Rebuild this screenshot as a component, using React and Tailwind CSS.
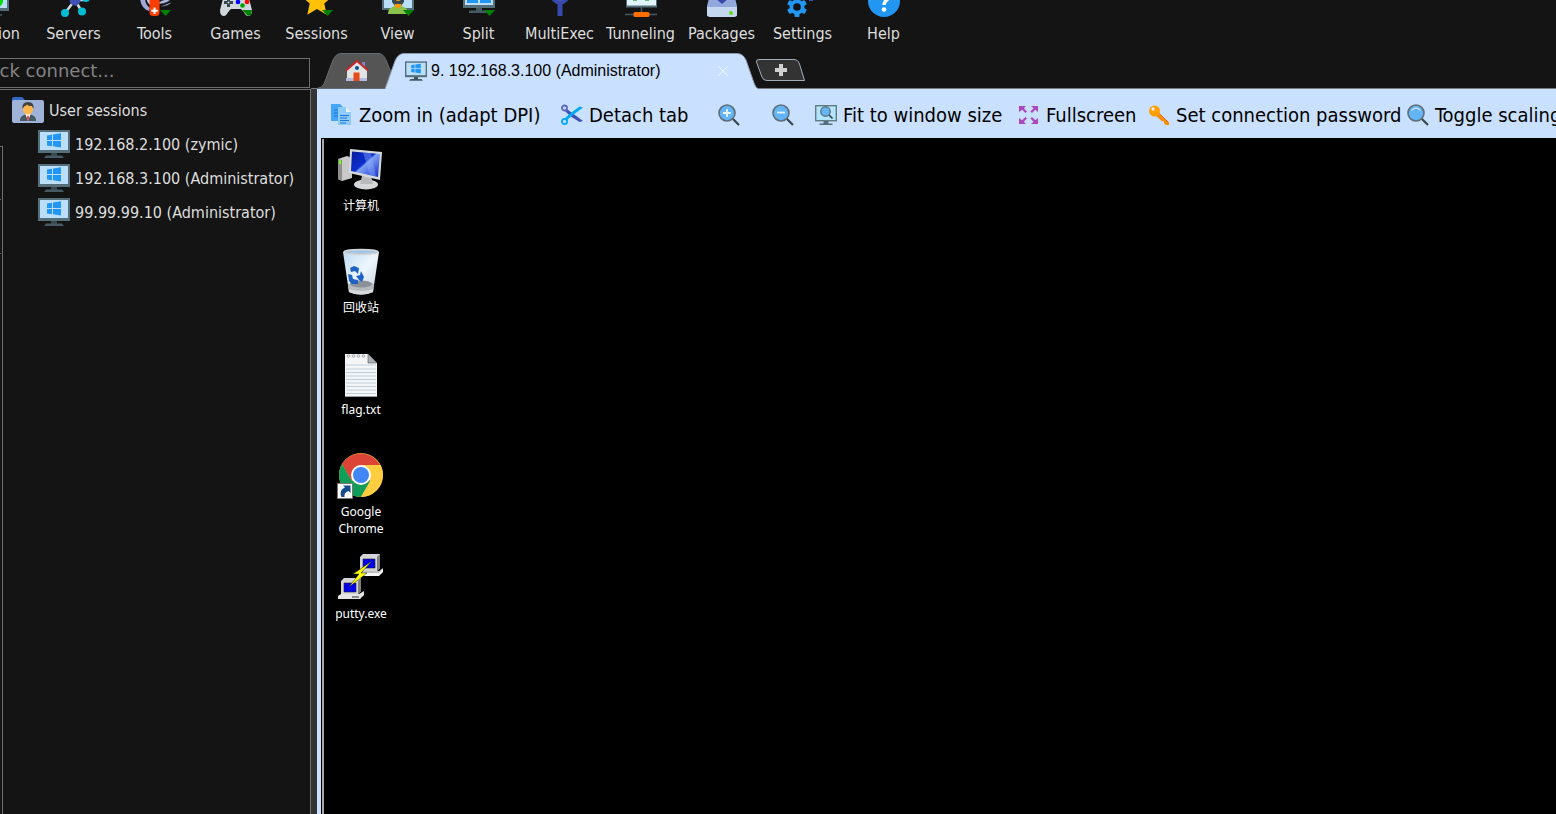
import React from "react";

const GreenArrow = ({ x = 21, y = 26 }) => (
  <path d={`M${x} ${y}h11l-5.500 6z`} fill="#008000" />
);

const WindowsMonitor = ({ className = "size-8" }) => (
  <svg viewBox="0 0 32 32" className={`${className} shrink-0`} aria-hidden="true">
    <rect y="2" width="32" height="23" fill="#546e7a" />
    <rect x="2" y="4" width="28" height="18" fill="#bbdefb" />
    <path d="M13 25h6v3h-6z" fill="#37474f" />
    <path d="M8 27.500h16l2 2.500H6z" fill="#455a64" />
    <path d="M9 7.500l5-.8v5.300H9zM15 6.500l8-1.200V12h-8zM9 13h5v5.300l-5-.8zM15 13h8v6.500l-8-1.200z" fill="#2196f3" />
  </svg>
);

const Drawing = ({ children, className = "size-8", box = "0 0 32 32" }) => (
  <svg viewBox={box} className={`${className} shrink-0`} aria-hidden="true">
    {children}
  </svg>
);

const menu = [
  {
    label: "Session",
    icon: (
      <>
        <rect y="2" width="32" height="25" fill="#546e7a" />
        <rect x="2" y="4" width="28" height="20" fill="#bbdefb" />
        <circle cx="20" cy="17" r="6" fill="#00e000" />
        <path d="M13 27h6v3h6v2H7v-2h6z" fill="#37474f" />
      </>
    ),
  },
  {
    label: "Servers",
    icon: (
      <>
        <path d="M17 16L7 29M17 16l7 12M17 16h11M17 16L6 6M17 16l5-12" stroke="#cfd8dc" strokeWidth="2.500" />
        <circle cx="17" cy="16" r="5.500" fill="#3f51b5" />
        <g fill="#00bcd4">
          <circle cx="7" cy="29" r="4" />
          <circle cx="24" cy="27.500" r="4" />
          <circle cx="28" cy="14" r="4" />
          <circle cx="6" cy="6" r="4" />
          <circle cx="22" cy="4" r="4" />
        </g>
      </>
    ),
  },
  {
    label: "Tools",
    icon: (
      <>
        <path d="M1 12c0 8 3 13 9 15l1-3c-4-3-5-6-5-12z" fill="#9fa8da" />
        <path d="M7 14l2 5 2 2v-7z" fill="#c5cae9" />
        <path d="M31 16c-2 2-5 3.500-11 4v-2l7-3zM32 18.500c-2 3-6 3.500-10 4" fill="#b0b8e0" stroke="#37474f" strokeWidth=".6" />
        <rect x="10.500" y="6" width="10" height="26" rx="3.500" fill="#ff3d00" />
        <path d="M14.500 23.500h2v2.300h2.300v2h-2.300v2.300h-2v-2.300h-2.300v-2h2.300z" fill="#fff" />
        <GreenArrow />
      </>
    ),
  },
  {
    label: "Games",
    icon: (
      <>
        <path d="M4 11Q5 8 8 8h16q3 0 4 3l4 15q0 6-4 6c-3 0-4-5-7-7H11c-3 2-4 7-7 7q-4 0-4-6z" fill="#cfd8dc" />
        <path d="M7 14h3v3h3v3h-3v3H7v-3H4v-3h3z" fill="#37474f" />
        <circle cx="8.500" cy="18.500" r="1" fill="#cfd8dc" />
        <circle cx="18" cy="18" r="2.300" fill="#0000ff" />
        <circle cx="27" cy="18" r="2.300" fill="#f00" />
        <circle cx="22.500" cy="21.500" r="2.300" fill="#00a000" />
        <circle cx="22.500" cy="14" r="2.300" fill="#ffc107" />
        <path d="M22 26h10l-1 5-3 1z" fill="#008000" />
      </>
    ),
  },
  {
    label: "Sessions",
    icon: (
      <>
        <path d="M16 1l4.500 10 11 1.200-8.200 7.400 2.400 11.200L16 25l-9.700 5.800 2.400-11.200L.5 12.200l11-1.200z" fill="#ffc107" />
        <GreenArrow />
      </>
    ),
  },
  {
    label: "View",
    icon: (
      <>
        <rect y="2" width="32" height="24" fill="#546e7a" />
        <rect x="2" y="4" width="28" height="20" fill="#bbdefb" />
        <path d="M10 10h12v8l-3 4h-6l-3-4z" fill="#37474f" />
        <ellipse cx="16" cy="12" rx="4" ry="5" fill="#ffa726" />
        <path d="M6 30c0-5 3-7 7-8h6c4 1 7 3 7 8z" fill="#8bc34a" />
        <path d="M12.500 20h7l-1 3-2.500 1.500-2.500-1.500z" fill="#ff9800" />
        <GreenArrow />
      </>
    ),
  },
  {
    label: "Split",
    icon: (
      <>
        <rect y="2" width="32" height="22" fill="#546e7a" />
        <rect x="2" y="4" width="28" height="17" fill="#bbdefb" />
        <path d="M4 6h11v6H4zM17 6h11v6H17zM4 14h11v5H4zM17 14h11v5H17z" fill="#2196f3" />
        <path d="M13 24h6v2.500h7V29H6v-2.500h7z" fill="#455a64" />
        <GreenArrow />
      </>
    ),
  },
  {
    label: "MultiExec",
    icon: (
      <>
        <path d="M16 32V20" fill="none" stroke="#3949ab" strokeWidth="5" />
        <circle cx="16" cy="11" r="7.500" fill="#5c6bc0" stroke="#3949ab" strokeWidth="4" />
      </>
    ),
  },
  {
    label: "Tunneling",
    icon: (
      <>
        <rect x="1" y="0" width="31" height="23.500" fill="#546e7a" />
        <rect x="2" y="2" width="29" height="19.500" fill="#e1f5fe" />
        <path d="M8 15h4v2H8zM20 15h4v2h-4z" fill="#66bb6a" />
        <path d="M16.500 23v5M0 30.500h32" stroke="#455a64" strokeWidth="1.500" />
        <rect x="8.500" y="28" width="16" height="5" rx="1.500" fill="#ff6d00" />
      </>
    ),
  },
  {
    label: "Packages",
    icon: (
      <>
        <path d="M5 6h22l4 16v10H1V22z" fill="#90a8dc" />
        <path d="M1 23h30v7q0 3-3 3H4q-3 0-3-3z" fill="#c5d6f0" />
        <path d="M13 6h6v8h4l-7 6-7-6h4z" fill="#3949ab" />
        <circle cx="25" cy="29" r="2" fill="#64dd17" />
      </>
    ),
  },
  {
    label: "Settings",
    icon: (
      <>
        <g transform="translate(10 23)" fill="#2196f3">
          <circle r="7.500" />
          {[0, 60, 120].map((a) => (
            <rect key={a} x="-2.500" y="-10" width="5" height="20" rx="1" transform={`rotate(${a})`} />
          ))}
        </g>
        <circle cx="10" cy="23" r="3.800" fill="#141414" />
        <circle cx="24" cy="10" r="6" fill="#3f51b5" />
        <path d="M22 14h4v3h-4z" fill="#3f51b5" />
        <circle cx="24" cy="10" r="2.500" fill="#141414" />
      </>
    ),
  },
  {
    label: "Help",
    icon: (
      <>
        <circle cx="16" cy="17" r="16" fill="#2196f3" />
        <path d="M11 11c0-6 11-6 11 0 0 5-6 4-6 10" fill="none" stroke="#fff" strokeWidth="3.500" />
        <circle cx="16" cy="25.500" r="2.300" fill="#fff" />
      </>
    ),
  },
];

const sessions = ["192.168.2.100 (zymic)", "192.168.3.100 (Administrator)", "99.99.99.10 (Administrator)"];

const Magnifier = ({ sign, shine }) => (
  <Drawing className="size-[22px]" box="0 0 22 22">
    <path d="M14 14l7 7" stroke="#37474f" strokeWidth="2.200" />
    <circle cx="9" cy="9" r="8" fill="#64b5f6" stroke="#616e78" strokeWidth="1.600" />
    {sign && <path d={sign} stroke="#e8f4ff" strokeWidth="1.800" />}
    {shine && <path d="M4.500 6.500q4.500-5 9 0" fill="none" stroke="#bbdefb" strokeWidth="1.300" />}
  </Drawing>
);

const tools = [
  {
    label: "Zoom in (adapt DPI)",
    width: "w-[230px]",
    icon: (
      <Drawing className="size-[22px]" box="0 0 22 22">
        <path d="M0 0h9l4 4v13H0z" fill="#42a5f5" />
        <path d="M3 6h4M3 9h4M3 12h4" stroke="#1976d2" />
        <path d="M7 3h8l5 5v13H7z" fill="#90caf9" />
        <path d="M15 3v5h5z" fill="#e1f5fe" />
        <path d="M9 11.500h9M9 14h7M9 16.500h9M9 19h6" stroke="#1976d2" strokeWidth="1.200" />
      </Drawing>
    ),
  },
  {
    label: "Detach tab",
    width: "w-[157px]",
    icon: (
      <Drawing className="size-[22px]" box="0 0 22 22">
        <path d="M5 4.500l7 5 10 7.500-3.500 1L9 12 4 7z" fill="#3f51b5" />
        <circle cx="3.500" cy="4" r="2.500" fill="none" stroke="#5c6bc0" strokeWidth="1.800" />
        <path d="M18.500 2.500L22 3.500 12 11l-7 6-1.500-2.500L9 9.500z" fill="#03a9f4" />
        <circle cx="3.500" cy="17.500" r="2.600" fill="none" stroke="#03a9f4" strokeWidth="1.800" />
      </Drawing>
    ),
  },
  { name: "Zoom in", width: "w-[54px]", icon: <Magnifier sign="M5 9h8M9 5v8" /> },
  { name: "Zoom out", width: "w-[43px]", icon: <Magnifier sign="M5 8.500h8" /> },
  {
    label: "Fit to window size",
    width: "w-[203px]",
    icon: (
      <Drawing className="size-[22px]" box="0 0 22 22">
        <rect x=".7" y="1.700" width="20.600" height="15" fill="#b3e5fc" stroke="#607d7f" strokeWidth="1.400" />
        <path d="M8.500 17h5v2.500h4V21h-13v-1.500h4z" fill="#546e7a" />
        <path d="M13 10l4.500 4.500" stroke="#37474f" strokeWidth="1.700" />
        <circle cx="10.500" cy="7.500" r="4.700" fill="#64b5f6" stroke="#607080" strokeWidth="1.400" />
      </Drawing>
    ),
  },
  {
    label: "Fullscreen",
    width: "w-[130px]",
    icon: (
      <Drawing className="size-[22px]" box="0 0 22 22">
        <path
          d="M1 2h7L5.800 4.200 9 7.400 7.400 9 4.200 5.800 1 8zM20 2v6l-2.700-2.200L14 9l-1.600-1.600 3.200-3.200L13 2zM1 20v-6l3 2.200L7.400 13 9 14.600 5.800 17.800 8 20zM20 20h-7l2.600-2.200-3.200-3.200L14 13l3.300 3.200L20 14z"
          fill="#ab47bc"
        />
      </Drawing>
    ),
  },
  {
    label: "Set connection password",
    width: "w-[259px]",
    icon: (
      <Drawing className="size-[22px]" box="0 0 22 22">
        <path d="M9 8l12 10.500V21h-3.500L16 19v-1.800h-2L7 11z" fill="#fb8c00" />
        <path d="M11 9l9.500 9.500" stroke="#e65100" strokeWidth=".8" />
        <circle cx="6.500" cy="7" r="5.500" fill="#ffa000" />
        <circle cx="5" cy="5" r="1.700" fill="#e3f0ff" />
      </Drawing>
    ),
  },
  { label: "Toggle scaling", width: "", icon: <Magnifier shine /> },
];

const desktop = [
  {
    label: "计算机",
    icon: (
      <>
        <defs>
          <linearGradient id="screen" x1="0" y1="0" x2="1" y2="1">
            <stop offset="0" stopColor="#0a1a9c" />
            <stop offset=".45" stopColor="#0c2fd0" />
            <stop offset=".5" stopColor="#7fa2f5" />
            <stop offset="1" stopColor="#1028c8" />
          </linearGradient>
        </defs>
        <path d="M1 13l9-3 5 2v20L5 35l-4-2z" fill="#c9c9c9" />
        <path d="M1 13l4 1v21l-4-2z" fill="#8e8e8e" />
        <path d="M2 14l2 .5v4L2 18z" fill="#76ff03" />
        <ellipse cx="29" cy="38.500" rx="12" ry="5" fill="#d5d7d8" />
        <path d="M25 30h9l2 8H23z" fill="#b8bbbd" />
        <path d="M13 3l32 3-2 28-31-7z" fill="#d7dadc" />
        <path d="M15 5.500l28 2.500-2 23-27-6z" fill="url(#screen)" />
        <path d="M26 6.500l8 .8 5 23.200-6-1.300z" fill="#8fb0ff" opacity=".4" />
      </>
    ),
  },
  {
    label: "回收站",
    icon: (
      <>
        <defs>
          <linearGradient id="bin" x1="0" x2="1" y1="0" y2="1">
            <stop offset="0" stopColor="#bcdcf5" />
            <stop offset=".5" stopColor="#eef6fc" />
            <stop offset="1" stopColor="#c2cfda" />
          </linearGradient>
        </defs>
        <path d="M6 4l6 40q12 5 24 0l6-40z" fill="url(#bin)" />
        <path d="M11 36q13-7 26 0l-1 8q-12 5-24 0z" fill="#b4babf" />
        <ellipse cx="24" cy="36" rx="11" ry="3.500" fill="#8b9196" />
        <path d="M12 41q12 4 24 0v3q-12 5-24 0z" fill="#d7dadc" />
        <ellipse cx="24" cy="4" rx="17" ry="2.500" fill="#a4c6e3" stroke="#d3d6d8" strokeWidth="1.500" />
        <path d="M13 20l4-2 5 2-1 6-3-3-4 1zM24 23l3 6-2 5-3-2-3-4 4-1zM11 26l4 1 1 4 5 1v4h-6l-3-3z" fill="#1e63c4" />
      </>
    ),
  },
  {
    label: "flag.txt",
    icon: (
      <>
        <path d="M8 4h23l9 9v34H8z" fill="#f4f5f6" />
        <path d="M9 15h30M9 19h30M9 22.500h30M9 26h30M9 29.500h30M9 33h30M9 36.500h30M9 40h30M9 43.500h30" stroke="#bfd0dd" strokeWidth="1" />
        <path d="M31 4v9h9z" fill="#aaafb5" stroke="#555" strokeWidth=".6" />
        <g fill="none" stroke="#999" strokeWidth=".8">
          <circle cx="11.500" cy="6" r="1.300" />
          <circle cx="16.500" cy="6" r="1.300" />
          <circle cx="21.500" cy="6" r="1.300" />
          <circle cx="26.500" cy="6" r="1.300" />
        </g>
        <path d="M8 46.500h32" stroke="#9aa0a5" />
      </>
    ),
  },
  {
    label: "Google Chrome",
    icon: (
      <>
        <circle cx="24" cy="23" r="22" fill="#ffcd40" />
        <path d="M24 13h19A22 22 0 0 0 5 12l9.500 16.500z" fill="#db4437" />
        <path d="M5 12a22 22 0 0 0 19 33l9.500-16.500H14.500z" fill="#0f9d58" />
        <path d="M24 13h19.500a22 22 0 0 1-19.500 32l9.500-16.500z" fill="#ffcd40" />
        <circle cx="24" cy="23" r="10" fill="#fff" />
        <circle cx="24" cy="23" r="8" fill="#4285f4" />
        <path d="M.5 31.500h15v15H.5z" fill="#fff" stroke="#777" />
        <path d="M4.500 45c-2-4-.5-8 3.500-9.500L6 33.500h7.500V41L11.500 39c-3 1-4.500 3-4 6z" fill="#174b8c" />
      </>
    ),
  },
  {
    label: "putty.exe",
    icon: (
      <>
        <path d="M23 3l3-3h17v14l-3 3H23z" fill="#d5d5d5" />
        <path d="M40 3l3-3v14l-3 3z" fill="#808080" />
        <path d="M26 5h12v9H26z" fill="#0000f0" stroke="#222" strokeWidth=".6" />
        <path d="M26 17h16l4-3v3l-4 4H22z" fill="#c0c0c0" />
        <path d="M22 19h20l4-4v3l-4 4H22z" fill="#f5f5f5" />
        <path d="M4 27l3-3h17v13l-3 3H4z" fill="#d5d5d5" />
        <path d="M21 27l3-3v13l-3 3z" fill="#808080" />
        <path d="M7 29h12v9H7z" fill="#0000f0" stroke="#222" strokeWidth=".6" />
        <path d="M1 42l3-2h18l5-3v4l-4 4H1z" fill="#e5e5e5" />
        <path d="M15 43h7" stroke="#333" />
        <path d="M35 7L16 20h6L12 33l18-14h-6z" fill="#ff0" stroke="#222" strokeWidth=".5" />
      </>
    ),
  },
];

const Tab = ({ path, fill, stroke, box, children, className }) => (
  <div className={`relative flex shrink-0 items-center ${className}`}>
    <svg viewBox={box} className="absolute inset-0 size-full overflow-visible" aria-hidden="true">
      <path d={path} fill={fill} stroke={stroke} />
    </svg>
    {children}
  </div>
);

export default function App() {
  return (
    <div className="flex h-screen flex-col overflow-hidden bg-[#141414] font-['DejaVu_Sans_Condensed','Noto_Sans',sans-serif] text-[#dedede]">
      <nav className="-ml-12 flex h-[53px] shrink-0" aria-label="Main">
        {menu.map((m) => (
          <button key={m.label} className="-mt-4 flex w-[81px] shrink-0 flex-col items-center gap-2 text-base leading-5">
            <Drawing className="size-8 overflow-visible">{m.icon}</Drawing>
            <span>{m.label}</span>
          </button>
        ))}
      </nav>

      <div className="flex min-h-0 flex-1">
        <aside className="flex w-[311px] shrink-0 flex-col pt-[5px]">
          <input
            aria-label="Quick connect"
            placeholder="Quick connect..."
            className="-ml-9 mr-px h-[30px] border border-[#6e6e6e] bg-transparent pb-1.5 pl-1 font-['DejaVu_Sans',sans-serif] text-lg leading-6 outline-none placeholder:text-[#858585]"
          />
          <div className="mt-px flex flex-1 border-t border-r border-[#6e6e6e]">
            <div className="mt-14 w-[3px] border-t border-r border-[#6e6e6e] pt-[52px]">
              <div className="h-[55px] w-px border-y border-[#6e6e6e]" />
            </div>
            <ul className="flex flex-col pt-[3px] pl-[9px] text-base">
              <li className="flex h-[34px] items-center gap-[5px]">
                <Drawing>
                  <path d="M0 9V5q0-2 2-2h8l3 3v6H0z" fill="#3367c8" />
                  <rect y="6" width="32" height="23" rx="2" fill="#9fb3d8" />
                  <path d="M8 27c0-5 3-6 8-7 5 1 8 2 8 7z" fill="#455a64" />
                  <path d="M13 19h6l-3 8z" fill="#fff" />
                  <path d="M16 21l1 2-.5 4h-1L15 23z" fill="#e53935" />
                  <ellipse cx="16" cy="15" rx="5" ry="5.500" fill="#ffb74d" />
                  <path d="M10.500 15q-1-7 5.500-7t5.500 7l-1.500-3q-4 0-5-1.500-1 1.500-3 2z" fill="#424242" />
                </Drawing>
                <span className="pt-0.5">User sessions</span>
              </li>
              {sessions.map((s) => (
                <li key={s}>
                  <button className="ml-[26px] flex h-[34px] items-center gap-[5px] whitespace-nowrap">
                    <WindowsMonitor />
                    <span className="pt-0.5">{s}</span>
                  </button>
                </li>
              ))}
            </ul>
          </div>
        </aside>

        <div className="flex min-w-0 flex-1 flex-col">
          <div className="flex h-9 shrink-0 border-b border-[#77797c] pl-1.5 font-['Liberation_Sans',sans-serif]">
            <Tab
              className="h-9 w-[70px]"
              box="0 0 70 36"
              path="M0 35.500Q5 35 7 31L16 7Q19 .5 24 .5H62Q66 .5 69 7L75 22 70 35.500z"
              fill="#555555"
              stroke="#666c74"
            >
              <button aria-label="Home" className="relative ml-[28px]">
                <Drawing className="size-6" box="0 0 24 24">
                  <path d="M17 3h3v8h-3z" fill="#7986cb" />
                  <path d="M2 10L12 2l10 8v12H2z" fill="#e3e3e3" />
                  <path d="M1 19h21v3H1z" fill="#b5bbdf" />
                  <path d="M1 11.500L12 2l11 9.500" fill="none" stroke="#c62828" strokeWidth="2" />
                  <path d="M8.500 13.500h6V22h-6z" fill="#e64a19" />
                  <circle cx="12" cy="9" r="2" fill="#01579b" />
                </Drawing>
              </button>
            </Tab>
            <Tab
              className="h-9 w-[371px]"
              box="0 0 371 36"
              path="M-2 36L8 8Q11 .5 17 .5H350Q356 .5 359 7L367 30Q369 36 372 36"
              fill="#cae0ff"
              stroke="#8b98aa"
            >
              <button className="relative flex items-center gap-1 pl-[18px] text-base whitespace-nowrap text-black">
                <WindowsMonitor className="size-[22px]" />
                9. 192.168.3.100 (Administrator)
              </button>
              <button aria-label="Close tab" className="relative mr-[29px] ml-auto">
                <Drawing className="size-3" box="0 0 12 12">
                  <path d="M1 1l10 10M11 1L1 11" stroke="#edf4ff" strokeWidth="1" />
                </Drawing>
              </button>
            </Tab>
            <Tab
              className="mt-[5px] -ml-[3px] h-6 w-[51px]"
              box="0 0 51 24"
              path="M4 1.500H39Q43 1.500 44.500 6L49.500 22.500H12Q8 22.500 7 19L1.500 4Q1 1.500 4 1.500z"
              fill="#333333"
              stroke="#a0acb8"
            >
              <button aria-label="New tab" className="relative ml-5">
                <Drawing className="size-3" box="0 0 12 12">
                  <path d="M4 0h4v4h4v4H8v4H4V8H0V4h4z" fill="#d0d0d0" />
                </Drawing>
              </button>
            </Tab>
          </div>

          <div className="flex min-h-0 flex-1">
            <div className="w-1.5 shrink-0 bg-[#333333]" />
            <div className="flex min-w-0 flex-1 flex-col bg-[#cae0ff] pl-1">
              <div className="flex h-[49px] shrink-0 items-center overflow-hidden pt-[3px] pl-2.5 text-xl text-black" role="toolbar">
                {tools.map((t) => (
                  <button
                    key={t.label || t.name}
                    aria-label={t.label || t.name}
                    className={`flex shrink-0 items-center gap-1.5 whitespace-nowrap ${t.width}`}
                  >
                    {t.icon}
                    {t.label}
                  </button>
                ))}
              </div>
              <main className="flex min-h-0 flex-1 bg-black pt-px pl-px">
                <div className="w-0.5 bg-[#a8a8a8]" />
                <div className="flex w-[74px] flex-col pt-[7px] font-['Noto_Sans','Noto_Sans_CJK_SC',sans-serif] text-xs leading-[17px] text-white">
                  {desktop.map((d) => (
                    <button key={d.label} className="flex h-[102px] flex-col items-center gap-[3px] px-3">
                      <Drawing className="size-12" box="0 0 48 48">{d.icon}</Drawing>
                      <span>{d.label}</span>
                    </button>
                  ))}
                </div>
              </main>
            </div>
          </div>
        </div>
      </div>
    </div>
  );
}
